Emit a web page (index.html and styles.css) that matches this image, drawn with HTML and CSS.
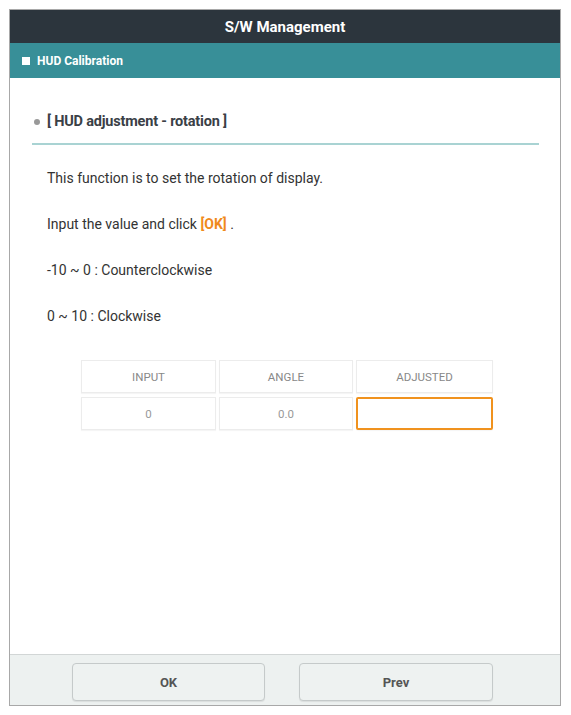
FILE: index.html
```html
<!DOCTYPE html>
<html lang="en">
<head>
    <meta charset="UTF-8">
    <meta name="viewport" content="width=device-width, initial-scale=1.0">
    <title>S/W Management</title>
    <link rel="stylesheet" href="styles.css">
</head>
<body>
    <div class="frame">
        <div class="titlebar">S/W Management</div>
        <div class="subbar"><span class="square"></span>HUD Calibration</div>
        <div class="content">
            <div class="section-title"><span class="dot"></span>[ HUD adjustment - rotation ]</div>
            <div class="desc">
                <p>This function is to set the rotation of display.</p>
                <p>Input the value and click <span class="hl">[OK]</span> .</p>
                <p>-10 ~ 0 : Counterclockwise</p>
                <p>0 ~ 10 : Clockwise</p>
            </div>
            <div class="grid">
                <div class="cell head">INPUT</div>
                <div class="cell head">ANGLE</div>
                <div class="cell head">ADJUSTED</div>
                <div class="cell">0</div>
                <div class="cell">0.0</div>
                <input class="cell field" type="text">
            </div>
        </div>
        <div class="footer">
            <button class="btn ok">OK</button>
            <button class="btn prev">Prev</button>
        </div>
    </div>
</body>
</html>
```

FILE: styles.css
```css
body {
    margin: 0;
    background-color: #fff;
    font-family: Roboto, "Liberation Sans", sans-serif;
    color: #333;
}

.frame {
    margin: 9px 0 0 9px;
    width: 550px;
    height: 695px;
    border: 1px solid #a8a8a8;
    display: flex;
    flex-direction: column;
}

.titlebar {
    height: 33px;
    background-color: #2c353d;
    color: #fff;
    font-size: 15px;
    font-weight: bold;
    display: flex;
    align-items: center;
    justify-content: center;
}

.subbar {
    height: 35px;
    background-color: #388f98;
    color: #fff;
    font-size: 12px;
    font-weight: bold;
    display: flex;
    align-items: center;
    padding-left: 12px;
}

.square {
    width: 8px;
    height: 8px;
    background-color: #fff;
    margin-right: 7px;
}

.content {
    flex: 1;
    padding: 34px 21px 0 22px;
}

.section-title {
    display: flex;
    align-items: center;
    font-size: 14.5px;
    font-weight: bold;
    letter-spacing: -0.2px;
    color: #3a4046;
    line-height: 20px;
    padding-bottom: 11px;
    border-bottom: 2px solid #a9d3d3;
}

.dot {
    width: 6px;
    height: 6px;
    border-radius: 50%;
    background-color: #999;
    margin: 0 7px 0 2px;
}

.desc {
    padding: 23px 0 0 15px;
    font-size: 14px;
    display: flex;
    flex-direction: column;
    gap: 26px;
}

.desc p {
    margin: 0;
    line-height: 20px;
}

.hl {
    color: #f08a1c;
    font-weight: bold;
}

.grid {
    margin: 34px 0 0 49px;
    display: grid;
    grid-template-columns: 135px 134px 137px;
    grid-auto-rows: 33px;
    column-gap: 3px;
    row-gap: 4px;
}

.cell {
    border: 1px solid #ececec;
    box-shadow: 0 1px 1px rgba(0, 0, 0, 0.04);
    display: flex;
    align-items: center;
    justify-content: center;
    font-size: 11.5px;
    color: #999;
}

.head {
    color: #888;
    padding-top: 1px;
}

.field {
    box-sizing: border-box;
    border: 2px solid #f0921e;
    border-radius: 2px;
    margin: 0;
    padding: 0;
    font: inherit;
    outline: none;
}

.footer {
    height: 51px;
    border-top: 1px solid #d2d6d6;
    background-color: #edf1f0;
    display: flex;
    align-items: flex-start;
    gap: 34px;
    padding: 8px 0 0 62px;
    box-sizing: border-box;
}

.btn {
    height: 38px;
    background-color: #eef2f1;
    border: 1px solid #c5caca;
    border-radius: 4px;
    box-shadow: 0 1px 1px rgba(0, 0, 0, 0.08);
    font-family: Roboto, "Liberation Sans", sans-serif;
    font-size: 13px;
    font-weight: bold;
    color: #555;
    cursor: pointer;
}

.ok {
    width: 193px;
}

.prev {
    width: 194px;
}
```
